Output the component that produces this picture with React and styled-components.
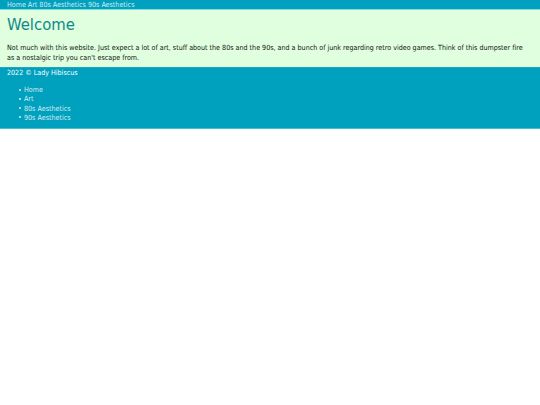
import React from 'react'
import styled, { createGlobalStyle } from 'styled-components'

const Global = createGlobalStyle`
  body {
    margin: 0;
    background: #fff;
    font-family: 'DejaVu Sans Condensed', 'DejaVu Sans', Verdana, sans-serif;
    font-size: 7.1px;
  }
`

const Nav = styled.nav`
  background: #00a0bf;
  border-bottom: 1px solid #7fdfe0;
  padding: 0 7px;
  height: 9px;
  line-height: 9px;
`

const NavLink = styled.a`
  color: #d8ecf0;
  text-decoration: none;
  margin-right: 2px;
`

const Main = styled.main`
  background: #dfffdf;
  padding: 5px 12px 4px 7px;
`

const Title = styled.h1`
  margin: 0 0 8px;
  font-size: 16.5px;
  font-weight: normal;
  color: #108888;
  line-height: 20px;
`

const Text = styled.p`
  margin: 0;
  color: #111;
  line-height: 10px;
`

const Footer = styled.footer`
  background: #00a0bf;
  border-top: 1px solid #20a8b8;
  border-bottom: 1px solid #40c0d0;
  padding: 0 7px 6px;
  color: #fff;
  line-height: 10px;
`

const List = styled.ul`
  margin: 7px 0 0;
  padding-left: 12px;
  list-style: none;
`

const Item = styled.li`
  color: #d8ecf0;
  line-height: 9.3px;

  &::before {
    content: '';
    display: inline-block;
    width: 2px;
    height: 2px;
    border-radius: 50%;
    background: #d8ecf0;
    margin-right: 3px;
    vertical-align: 1.5px;
  }
`

const links = ['Home', 'Art', '80s Aesthetics', '90s Aesthetics']

export default function App() {
  return (
    <>
      <Global />
      <Nav>
        {links.map(l => (
          <NavLink key={l} href="#">{l}</NavLink>
        ))}
      </Nav>
      <Main>
        <Title>Welcome</Title>
        <Text>
          Not much with this website. Just expect a lot of art, stuff about the 80s and the 90s, and a bunch of junk regarding retro video games. Think of this dumpster fire as a nostalgic trip you can't escape from.
        </Text>
      </Main>
      <Footer>
        <div>2022 © Lady Hibiscus</div>
        <List>
          {links.map(l => (
            <Item key={l}>{l}</Item>
          ))}
        </List>
      </Footer>
    </>
  )
}
